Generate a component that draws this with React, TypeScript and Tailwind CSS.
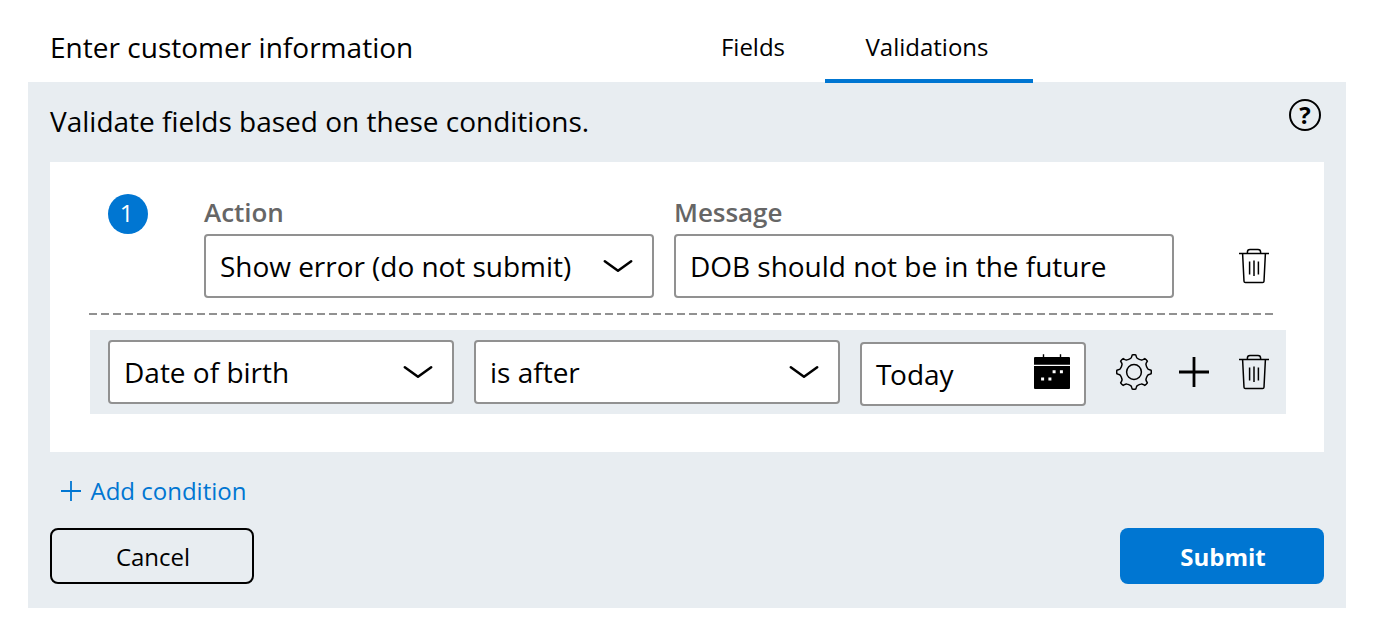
import React from "react";

const teeth = (() => {
  const cx = 18;
  const cy = 18;
  const p = (r: number, deg: number) => {
    const a = ((deg - 90) * Math.PI) / 180;
    return `${(cx + r * Math.cos(a)).toFixed(2)} ${(cy + r * Math.sin(a)).toFixed(2)}`;
  };
  let d = `M${p(17.2, -6)}`;
  for (let i = 0; i < 8; i++) {
    const a = i * 45;
    d += ` Q${p(17.5, a)} ${p(17.2, a + 6)}`;
    d += ` L${p(15.8, a + 8)} Q${p(14, a + 11)} ${p(14, a + 15)}`;
    d += ` Q${p(13.4, a + 22.5)} ${p(14, a + 30)}`;
    d += ` Q${p(14, a + 34)} ${p(15.8, a + 37)} L${p(17.2, a + 39)}`;
  }
  return d + "Z";
})();

function Gear() {
  return (
    <svg width="36" height="36" viewBox="0 0 36 36" fill="none" stroke="#000" strokeWidth="1.5" strokeLinejoin="round">
      <path d={teeth} />
      <circle cx="18" cy="18" r="7.4" />
    </svg>
  );
}

function Trash() {
  return (
    <svg width="30" height="36" viewBox="0 0 30 36" fill="none" stroke="#000" strokeWidth="1.5">
      <path d="M0 5.5H30" />
      <path d="M8.4 5.5V4Q8.4 1.4 11 1.4H19Q21.6 1.4 21.6 4V5.5" />
      <path d="M3.6 5.5L5 33.3Q5.1 34.6 6.4 34.6H23.6Q24.9 34.6 25 33.3L26.4 5.5" />
      <path d="M10.6 13.5V26.5M15 12.5V28M19.4 13.5V26.5" />
    </svg>
  );
}

function Chevron() {
  return (
    <svg width="30" height="14" viewBox="0 0 30 14" fill="none" stroke="#000" strokeWidth="2.5" strokeLinecap="round" strokeLinejoin="round">
      <path d="M1.8 2.2L15 11.8L28.2 2.2" />
    </svg>
  );
}

function Calendar() {
  return (
    <svg width="36" height="35" viewBox="0 0 36 35">
      <path d="M1 3H35Q36 3 36 4V10.8H0V4Q0 3 1 3Z" />
      <path d="M9.5 0.3V4M26.5 0.3V4" stroke="#000" strokeWidth="1.4" />
      <path d="M0 12H36V34Q36 35 35 35H1Q0 35 0 34Z" />
      <path d="M18.6 16.2h3v3h-3zM25.9 16.2h3v3h-3zM7.1 23.5h3v3h-3zM14.4 23.5h3v3h-3z" fill="#fff" />
    </svg>
  );
}

function Select({ label, className }: { label: string; className: string }) {
  return (
    <div className={`flex h-16 items-center justify-between rounded border-2 border-[#919191] bg-white pr-[19px] pl-3.5 ${className}`}>
      <span className="text-[28px] leading-10 whitespace-nowrap">{label}</span>
      <Chevron />
    </div>
  );
}

export default function App() {
  return (
    <main className="h-[638px] w-[1374px] overflow-hidden bg-white px-7 font-['Open_Sans',sans-serif] text-black">
      <header className="flex h-[82px] justify-between pr-[313px] pl-[22px]">
        <h1 className="pt-[27px] text-[28px] leading-10 tracking-[0.02px] whitespace-nowrap">Enter customer information</h1>
        <nav className="flex text-2xl leading-10">
          <div className="w-[144px] pt-[27px] text-center">Fields</div>
          <div className="z-10 h-[83px] w-[208px] border-b-4 border-[#0076d2] pt-[27px] pr-1 text-center">Validations</div>
        </nav>
      </header>
      <section className="h-[526px] bg-[#e8edf1] px-[22px]">
        <div className="flex h-20 justify-between pr-[3px]">
          <p className="pt-[19px] text-[28px] leading-10 whitespace-nowrap">Validate fields based on these conditions.</p>
          <div className="mt-[17px] flex size-8 items-center justify-center rounded-full border-2 border-black text-2xl leading-8 font-bold">?</div>
        </div>
        <div className="h-[290px] bg-white pt-8 pr-[38px] pl-10">
          <div className="flex h-[104px] pl-[18px]">
            <div className="flex size-10 items-center justify-center rounded-full bg-[#0076d2] pr-[3px] pb-0.5 text-2xl text-white">1</div>
            <div className="ml-14 w-[450px]">
              <div className="h-10 text-[26px] leading-[36px] font-semibold tracking-[-0.05px] text-[#666]">Action</div>
              <Select label="Show error (do not submit)" className="w-full tracking-[-0.04px]" />
            </div>
            <div className="ml-5 w-[500px]">
              <div className="h-10 text-[26px] leading-[36px] font-semibold tracking-[-0.05px] text-[#666]">Message</div>
              <div className="flex h-16 items-center rounded border-2 border-[#919191] bg-white pl-3.5 text-[28px] leading-10 tracking-[-0.03px] whitespace-nowrap">DOB should not be in the future</div>
            </div>
            <div className="mt-[54px] ml-[65px]"><Trash /></div>
          </div>
          <div className="mt-[15px] -ml-px h-0.5 w-[1184px] bg-[repeating-linear-gradient(to_right,#919191_0_8px,transparent_8px_12px)]" />
          <div className="mt-[15px] flex h-[84px] items-start bg-[#e8edf1] pt-2.5 pl-[18px]">
            <Select label="Date of birth" className="w-[346px]" />
            <Select label="is after" className="ml-5 w-[366px]" />
            <div className="mt-0.5 ml-5 flex h-16 w-[226px] items-center justify-between rounded border-2 border-[#919191] bg-white pr-3.5 pl-3.5">
              <span className="text-[28px] leading-10"><span className="tracking-[-1.4px]">T</span>oday</span>
              <div className="-mt-[5px]"><Calendar /></div>
            </div>
            <div className="mt-3.5 ml-[30px]"><Gear /></div>
            <svg className="mt-[17px] ml-[27px]" width="30" height="30" viewBox="0 0 30 30" stroke="#000" strokeWidth="2.8"><path d="M15 0V30M0 15H30" /></svg>
            <div className="mt-3.5 ml-[30px]"><Trash /></div>
          </div>
        </div>
        <div className="flex h-[76px] items-center gap-[9.5px] pt-0.5 pl-[11px] text-2xl text-[#0076d2]">
          <svg width="20" height="20" viewBox="0 0 20 20" stroke="currentColor" strokeWidth="1.8"><path d="M10 0V20M0 10H20" /></svg>
          <span>Add condition</span>
        </div>
        <div className="flex justify-between">
          <button className="h-14 w-[204px] rounded-lg border-2 border-black pt-0.5 pl-0.5 text-2xl">Cancel</button>
          <button className="h-14 w-[204px] rounded-lg bg-[#0076d2] pt-0.5 pl-0.5 text-2xl font-bold text-white">Submit</button>
        </div>
      </section>
    </main>
  );
}
